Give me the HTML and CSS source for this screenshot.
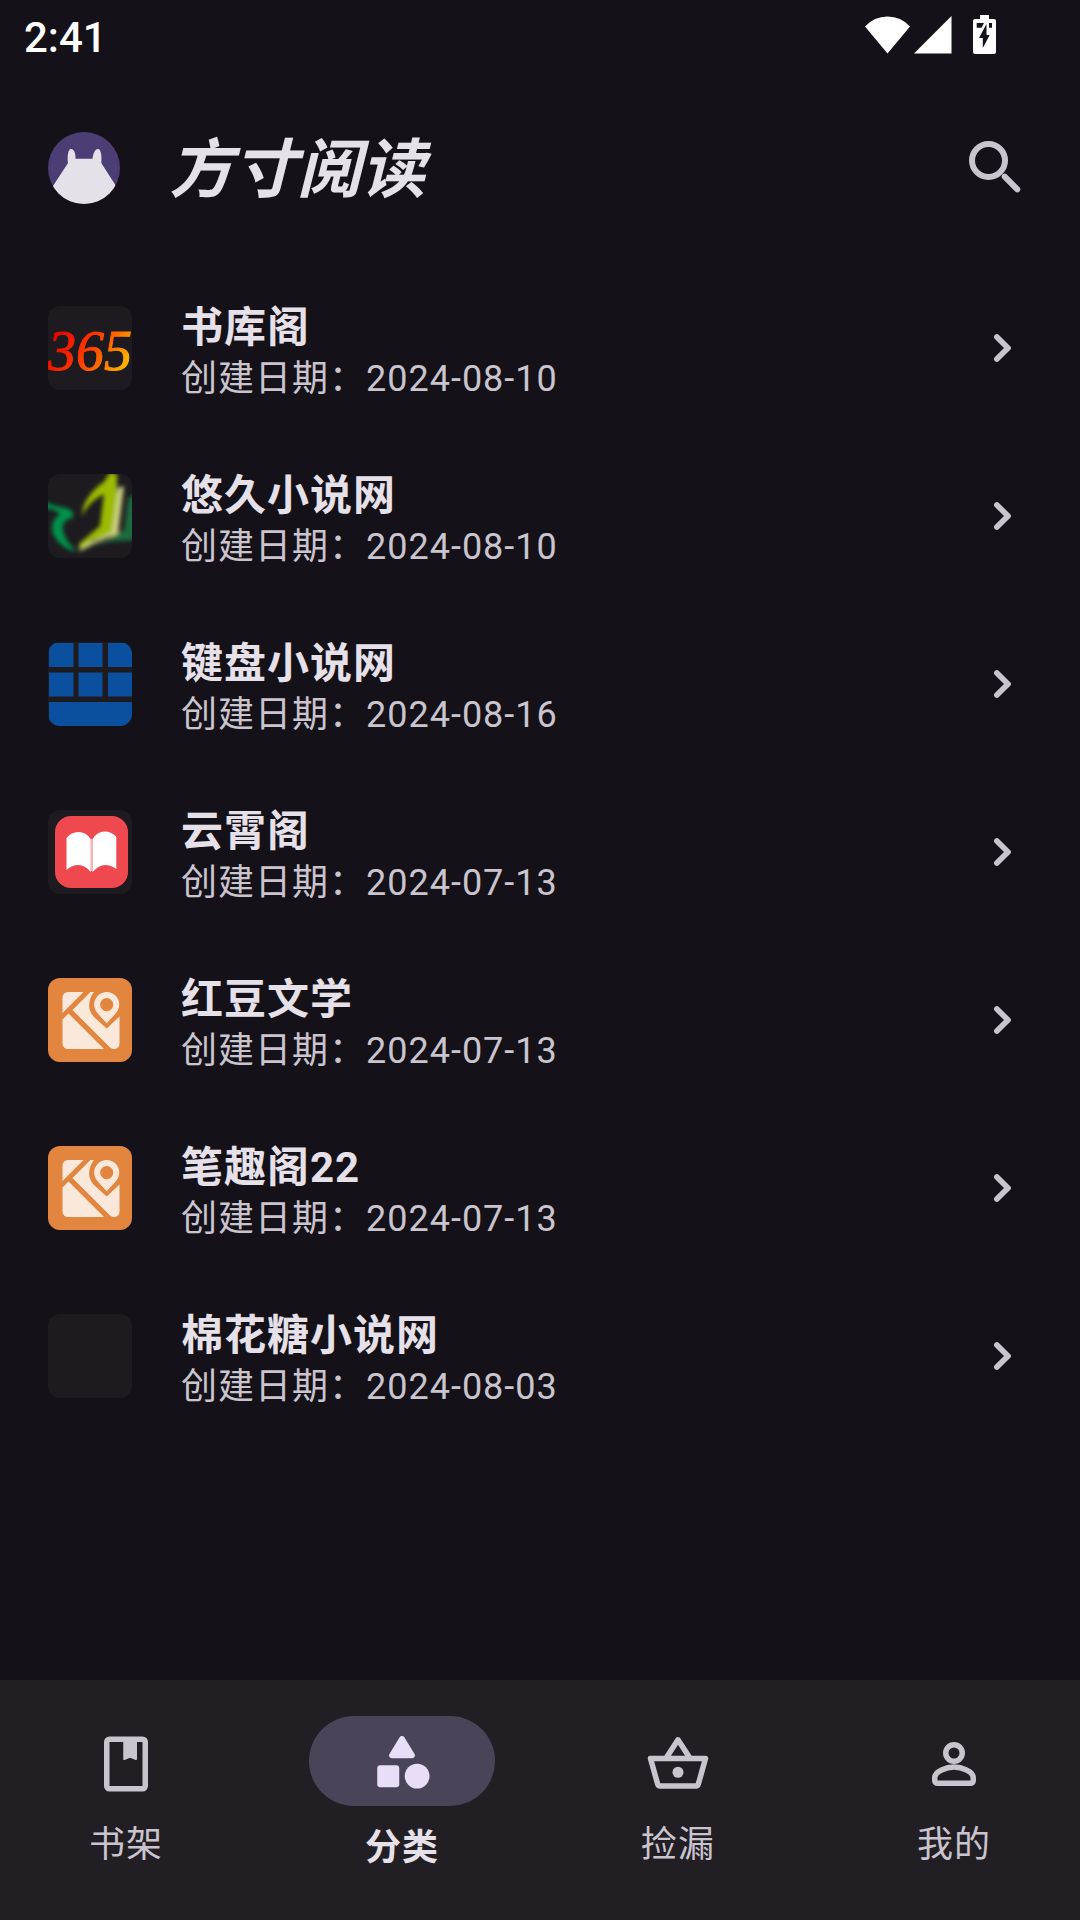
FILE: index.html
```html
<!DOCTYPE html>
<html lang="zh-CN">
<head>
    <meta charset="UTF-8">
    <meta name="viewport" content="width=device-width, initial-scale=1.0">
    <title>方寸阅读</title>
    <link rel="stylesheet" href="styles.css">
</head>
<body>
    <!-- Shared icons -->
    <svg class="sprite" aria-hidden="true">
        <symbol id="chevron" viewBox="0 0 24 24">
            <path d="M10.300 8.300l3.700 3.700-3.700 3.700" fill="none" stroke="currentColor" stroke-width="1.900" stroke-linecap="round" stroke-linejoin="round"/>
        </symbol>
        <symbol id="map-tile" viewBox="0 0 84 84">
            <rect width="84" height="84" fill="#e1853f"/>
            <g fill="#fae8da">
                <path d="M14.500 35V19.500a5.500 5.500 0 0 1 5.500-5.500h15.500z"/>
                <path d="M20.500 35.500L56 71H20a5.500 5.500 0 0 1-5.500-5.500V41.500z"/>
                <path d="M24.500 32L42.500 14H46c-4 5-5.500 11-4.500 17 .8 3 2.500 6 5 8.500L58.700 50.500 71.500 38.500V66a5 5 0 0 1-5 5c-2 0-3.500-.5-5-2z"/>
                <path fill-rule="evenodd" d="M58.700 14a12.600 12.600 0 0 0-12.600 12.600c0 4 2 7 4.500 10l8.100 8.600 8.100-8.600c2.500-3 4.500-6 4.500-10A12.600 12.600 0 0 0 58.700 14zm0 6a6.600 6.600 0 1 1 0 13.200 6.600 6.600 0 0 1 0-13.200z"/>
            </g>
        </symbol>
    </svg>

    <div class="app">
        <div class="status-bar">
            <span class="time">2:41</span>
            <div class="status-icons">
                <svg width="45" height="38" viewBox="0 0 45 38"><path d="M0 10.500Q9 .5 22.500.5T45 10.500L22.500 37.500z" fill="#fff"/></svg>
                <svg width="38" height="38" viewBox="0 0 38 38"><path d="M37.500 0v37.500H0z" fill="#fff"/></svg>
                <svg class="battery" width="23" height="39" viewBox="0 0 23 39">
                    <path d="M7 0h9v4h5a2 2 0 0 1 2 2v31a2 2 0 0 1-2 2H2a2 2 0 0 1-2-2V6a2 2 0 0 1 2-2h5z" fill="#fff"/>
                    <path d="M3.700 8H11L8.500 12.700H3.700zM16 8h3v4.700h-3zM13.500 9v11h3.200L9.800 33V23H6z" fill="#141218"/>
                </svg>
            </div>
        </div>

        <header class="top-bar">
            <svg class="avatar" viewBox="0 0 72 72">
                <rect width="72" height="72" fill="#4d3d75"/>
                <path d="M20 31c-1-6 0-14 3-14s5 5 4.500 9.700h17C45 22 47 17 50 17s4 8 3.300 14L68 54v18H5V54z" fill="#e6e0e9"/>
            </svg>
            <h1>方寸阅读</h1>
            <button class="search-btn" aria-label="搜索">
                <svg viewBox="0 0 24 24" fill="none" stroke="currentColor" stroke-width="2" stroke-linecap="round">
                    <circle cx="9.500" cy="9.500" r="5.500"/>
                    <path d="M14.900 14.900l4.200 4.200"/>
                </svg>
            </button>
        </header>

        <main class="source-list">
            <a class="source" href="#">
                <svg class="cover" viewBox="0 0 84 84">
                    <defs>
                        <linearGradient id="fire" gradientUnits="userSpaceOnUse" x1="10" y1="20" x2="76" y2="62">
                            <stop offset="0" stop-color="#e60000"/>
                            <stop offset=".5" stop-color="#ff3c00"/>
                            <stop offset="1" stop-color="#ffb400"/>
                        </linearGradient>
                    </defs>
                    <text class="cover-text" x="0" y="64" fill="url(#fire)" stroke="url(#fire)">365</text>
                </svg>
                <span class="info">
                    <span class="name">书库阁</span>
                    <span class="date">创建日期：2024-08-10</span>
                </span>
                <svg class="chevron"><use href="#chevron"/></svg>
            </a>

            <a class="source" href="#">
                <svg class="cover" viewBox="0 0 84 84">
                    <defs><filter id="soft"><feGaussianBlur stdDeviation="1.900"/></filter></defs>
                    <g filter="url(#soft)">
                        <path d="M88 20V66L60 68 48 72 66 61 76 56 80 24z" fill="#1c6a3c"/>
                        <path d="M-4 27C3 31 12 33 18 34c7 2 9 8 6 10-8 2-10 6-9 13 2 8 8 15 14 21C16 75 5 66 4 54c0-7 4-11 8-14C8 36 2 34-4 35z" fill="#06924a"/>
                        <path d="M69 0V30L65 60 45 66 32 78 31 70 52 52 56 20C46 25 38 33 34 42 34 28 46 14 56 8L62-2z" fill="#9dbb00"/>
                        <path d="M70 14l6-2-6 48-12 4-26 13 3-5 21-10 8-5z" fill="#cdd080"/>
                    </g>
                </svg>
                <span class="info">
                    <span class="name">悠久小说网</span>
                    <span class="date">创建日期：2024-08-10</span>
                </span>
                <svg class="chevron"><use href="#chevron"/></svg>
            </a>

            <a class="source" href="#">
                <svg class="cover" viewBox="0 0 84 84" fill="#0b509f">
                    <path d="M1 1h24.500v24H1zM30.500 1h24v24h-24zM60 1h24v24H60zM1 30.500h24.500v24H1zM30.500 30.500h24v24h-24zM60 30.500h24v24H60zM1 60h83v24H1z"/>
                </svg>
                <span class="info">
                    <span class="name">键盘小说网</span>
                    <span class="date">创建日期：2024-08-16</span>
                </span>
                <svg class="chevron"><use href="#chevron"/></svg>
            </a>

            <a class="source" href="#">
                <svg class="cover" viewBox="0 0 84 84">
                    <rect x="7" y="6" width="73" height="72" rx="16" fill="#ef484e"/>
                    <path d="M43.700 29v32" stroke="#f9b5b8" stroke-width="2"/>
                    <path d="M18.500 28Q23 22 30.500 22T42.700 29V62Q37 55 30.500 55T18.500 60zM44.700 29Q49 21.500 56.500 21.500T68.300 27V59Q63 55 57 55T44.700 62z" fill="#fff"/>
                </svg>
                <span class="info">
                    <span class="name">云霄阁</span>
                    <span class="date">创建日期：2024-07-13</span>
                </span>
                <svg class="chevron"><use href="#chevron"/></svg>
            </a>

            <a class="source" href="#">
                <svg class="cover"><use href="#map-tile"/></svg>
                <span class="info">
                    <span class="name">红豆文学</span>
                    <span class="date">创建日期：2024-07-13</span>
                </span>
                <svg class="chevron"><use href="#chevron"/></svg>
            </a>

            <a class="source" href="#">
                <svg class="cover"><use href="#map-tile"/></svg>
                <span class="info">
                    <span class="name">笔趣阁22</span>
                    <span class="date">创建日期：2024-07-13</span>
                </span>
                <svg class="chevron"><use href="#chevron"/></svg>
            </a>

            <a class="source" href="#">
                <svg class="cover"></svg>
                <span class="info">
                    <span class="name">棉花糖小说网</span>
                    <span class="date">创建日期：2024-08-03</span>
                </span>
                <svg class="chevron"><use href="#chevron"/></svg>
            </a>
        </main>

        <nav class="bottom-nav">
            <a class="nav-item" href="#">
                <span class="nav-icon">
                    <svg viewBox="0 0 24 24" fill="currentColor"><path fill-rule="evenodd" d="M6 2h12a2 2 0 0 1 2 2v16a2 2 0 0 1-2 2H6a2 2 0 0 1-2-2V4a2 2 0 0 1 2-2zm0 2v16h12V4h-2v6.200q0 .5-.5.300L13.500 9.700l-2 .8q-.5.2-.5-.3V4z"/></svg>
                </span>
                <span class="nav-label">书架</span>
            </a>
            <a class="nav-item active" href="#">
                <span class="nav-icon">
                    <svg viewBox="0 0 24 24" fill="currentColor">
                        <path d="M11.150 3.400L7.430 9.480c-.41.66.07 1.520.85 1.520h7.430c.78 0 1.260-.86.85-1.520L12.850 3.400c-.39-.64-1.310-.64-1.700 0z"/>
                        <circle cx="17.500" cy="17.500" r="4.500"/>
                        <path d="M4 21.500h6c.55 0 1-.45 1-1v-6c0-.55-.45-1-1-1H4c-.55 0-1 .45-1 1v6c0 .55.45 1 1 1z"/>
                    </svg>
                </span>
                <span class="nav-label">分类</span>
            </a>
            <a class="nav-item" href="#">
                <span class="nav-icon">
                    <svg viewBox="0 0 24 24" fill="none" stroke="currentColor" stroke-width="2" stroke-linejoin="round">
                        <path d="M2 10h20l-2.600 9.300q-.2.700-.9.700h-13q-.7 0-.9-.7zM7.700 9.800L12 3.200l4.300 6.600"/>
                        <circle cx="12" cy="15" r="2" fill="currentColor" stroke="none"/>
                    </svg>
                </span>
                <span class="nav-label">捡漏</span>
            </a>
            <a class="nav-item" href="#">
                <span class="nav-icon">
                    <svg viewBox="0 0 24 24" fill="none" stroke="currentColor" stroke-width="2">
                        <circle cx="12" cy="8" r="3"/>
                        <path d="M5 17c0-2.400 4.300-3.900 7-3.900s7 1.500 7 3.900v1a1 1 0 0 1-1 1H6a1 1 0 0 1-1-1z"/>
                    </svg>
                </span>
                <span class="nav-label">我的</span>
            </a>
        </nav>
    </div>
</body>
</html>
```
FILE: styles.css
```css
:root {
    --bg-color: #141218;
    --nav-bg: #211f24;
    --cover-bg: #1d1b1f;
    --text-color: #e6e0e9;
    --text-muted: #cac4cf;
    --indicator: #4a4458;
    --on-indicator: #e8def8;
}

* {
    margin: 0;
    padding: 0;
    box-sizing: border-box;
}

body {
    font-family: Roboto, 'Noto Sans CJK SC', sans-serif;
    background-color: var(--bg-color);
    color: var(--text-color);
}

a {
    color: inherit;
    text-decoration: none;
}

svg {
    display: block;
    flex-shrink: 0;
}

.sprite {
    position: absolute;
    width: 0;
    height: 0;
}

.app {
    display: flex;
    flex-direction: column;
    min-height: 100vh;
}

/* Status bar */
.status-bar {
    display: flex;
    align-items: flex-start;
    justify-content: space-between;
    height: 72px;
    padding: 0 84px 0 24px;
}

.time {
    padding-top: 2px;
    font-size: 42px;
    font-weight: 500;
    line-height: 72px;
    color: #fff;
}

.status-icons {
    display: flex;
    align-items: flex-end;
    gap: 4px;
    padding-top: 15px;
}

.battery {
    margin-left: 17px;
}

/* Top bar */
.top-bar {
    display: flex;
    align-items: center;
    height: 192px;
    padding: 0 48px;
}

.avatar {
    width: 72px;
    height: 72px;
    border-radius: 50%;
}

h1 {
    flex: 1;
    margin-left: 49px;
    padding-top: 6px;
    font-size: 64px;
    font-weight: 700;
    font-style: italic;
    line-height: 72px;
}

.search-btn {
    width: 72px;
    height: 72px;
    border: none;
    background: none;
    color: var(--text-muted);
    cursor: pointer;
}

.search-btn svg {
    width: 72px;
    height: 72px;
}

/* Source list */
.source-list {
    flex: 1;
}

.source {
    display: flex;
    align-items: center;
    height: 168px;
    padding: 0 42px 0 48px;
}

.cover {
    width: 84px;
    height: 84px;
    border-radius: 12px;
    background-color: var(--cover-bg);
}

.cover-text {
    font-family: 'Liberation Serif', serif;
    font-size: 56px;
    font-style: italic;
}

.info {
    flex: 1;
    display: flex;
    flex-direction: column;
    margin-left: 49px;
    padding-top: 8px;
}

.name {
    font-size: 42px;
    font-weight: 700;
    line-height: 54px;
    letter-spacing: 1px;
}

.date {
    font-size: 36px;
    line-height: 48px;
    letter-spacing: 1px;
    color: var(--text-muted);
}

.chevron {
    width: 72px;
    height: 72px;
    color: var(--text-muted);
}

/* Bottom navigation */
.bottom-nav {
    display: flex;
    align-items: center;
    gap: 24px;
    padding: 36px 0 48px;
    background-color: var(--nav-bg);
    color: var(--text-muted);
}

.nav-item {
    flex: 1;
    display: flex;
    flex-direction: column;
    align-items: center;
}

.nav-icon {
    display: flex;
    align-items: center;
    justify-content: center;
    width: 186px;
    height: 84px;
    padding-top: 6px;
    border-radius: 45px;
}

.nav-icon svg {
    width: 66px;
    height: 66px;
}

.nav-label {
    margin-top: 18px;
    font-size: 36px;
    line-height: 48px;
    letter-spacing: 1px;
}

.nav-item.active .nav-icon {
    height: 90px;
    padding-top: 0;
    background-color: var(--indicator);
    color: var(--on-indicator);
}

.nav-item.active .nav-label {
    font-weight: 700;
    color: var(--text-color);
}
```
